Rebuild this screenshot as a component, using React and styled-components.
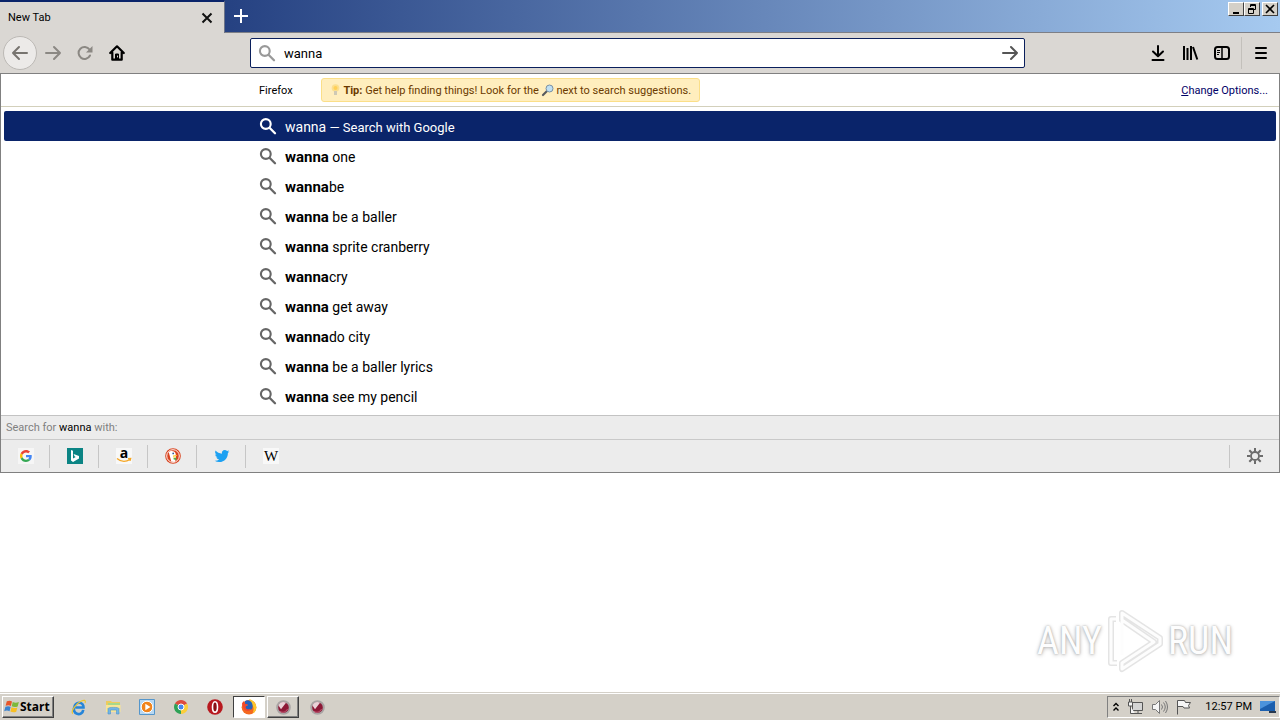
import React from "react";
import styled, { createGlobalStyle } from "styled-components";

const GlobalStyle = createGlobalStyle`
  * { box-sizing: border-box; }
  body { margin: 0; background: #fff; }
  body, button, input { font-family: Roboto, "DejaVu Sans", sans-serif; font-size: 11px; color: #000; }
  button { margin: 0; padding: 0; border: 0; background: none; }
  svg { display: block; flex: none; overflow: visible; }
`;

const Desktop = styled.div`
  position: relative;
  display: flex;
  flex-direction: column;
  min-height: 100vh;
`;

/* ---- title bar ---- */
const TitleBar = styled.header`
  display: flex;
  height: 33px;
  border-bottom: 1px solid #7d7f86;
  background: linear-gradient(to right, #0a246a, #a6caf0);
`;
const Tab = styled.div`
  display: flex;
  align-items: center;
  justify-content: space-between;
  width: 225px;
  height: 33px;
  padding: 0 11px 0 8px;
  border-top: 2px solid #0a246a;
  border-right: 1px solid #6d7488;
  background: #dad7d3;
  line-height: 14px;
`;
const TabButton = styled.button`
  display: flex;
  align-items: center;
  justify-content: center;
  width: 32px;
  height: 32px;
`;
const CloseTab = styled.button`
  display: flex;
`;
const WindowButtons = styled.div`
  display: flex;
  margin-left: auto;
  padding: 2px 2px 0 0;
`;
const WindowButton = styled.button`
  display: flex;
  align-items: center;
  justify-content: center;
  width: 16px;
  height: 14px;
  margin-left: ${(p) => (p.$apart ? "2px" : "0")};
  background: #d4d0c8;
  border: 1px solid;
  border-color: #fff #404040 #404040 #fff;
`;

/* ---- navigation bar ---- */
const NavBar = styled.nav`
  display: flex;
  align-items: center;
  height: 41px;
  padding: 0 2px 0 3px;
  border-bottom: 1px solid #808080;
  background: #dad7d3;
`;
const NavButton = styled.button`
  display: flex;
  align-items: center;
  justify-content: center;
  width: 32px;
  height: 32px;
`;
const BackButton = styled(NavButton)`
  width: 34px;
  height: 34px;
  border: 1px solid #bcb9b5;
  border-radius: 50%;
  background: #eceae8;
`;
const UrlBar = styled.form`
  display: flex;
  flex: 1;
  align-items: center;
  height: 30px;
  margin: 0 117px;
  padding: 0 5px 0 7px;
  border: 1px solid #0a1f5c;
  border-radius: 2px;
  background: #fff;
`;
const UrlInput = styled.input`
  flex: 1;
  min-width: 0;
  margin-left: 9px;
  padding: 0;
  border: 0;
  outline: 0;
  background: none;
  font-size: 13px;
`;
const MenuButton = styled(NavButton)`
  width: 37px;
  margin-left: 3px;
  padding-left: 2px;
  border-left: 1px solid #c3c0bb;
`;

/* ---- address bar results ---- */
const Popup = styled.section`
  border: 1px solid #808080;
  border-top: 0;
`;
const TipRow = styled.div`
  display: flex;
  align-items: center;
  height: 33px;
  padding: 0 11px 0 258px;
  border-bottom: 1px solid #d3d0bb;
`;
const TipBox = styled.div`
  display: flex;
  align-items: center;
  height: 24px;
  margin-left: 28px;
  padding: 0 8px;
  border: 1px solid #fbdf88;
  border-radius: 3px;
  background: #ffeebe;
  color: #6b3a00;
  white-space: pre;
`;
const OptionsLink = styled.a`
  margin-left: auto;
  color: #000066;
  text-decoration: none;
`;
const Results = styled.ul`
  margin: 0;
  padding: 4px 3px;
  list-style: none;
`;
const Result = styled.button`
  display: flex;
  align-items: center;
  width: 100%;
  height: 30px;
  padding-left: 255px;
  border-radius: 2px;
  background: ${(p) => (p.$selected ? "#0a246a" : "none")};
  color: ${(p) => (p.$selected ? "#fff" : "#000")};
  font-size: 14px;
  line-height: 20px;
  white-space: pre;
`;
const ResultText = styled.span`
  margin-left: 9px;
  padding-top: 2px;
`;
const Typed = styled.b`
  font-size: 15px;
`;
const Action = styled.span`
  font-size: 13px;
`;
const SearchWith = styled.div`
  height: 25px;
  padding-left: 5px;
  border-top: 1px solid #c3c3c3;
  border-bottom: 1px solid #c9c9c9;
  background: #ececec;
  color: #808080;
  line-height: 24px;
`;
const Query = styled.span`
  color: #000;
`;
const Engines = styled.div`
  display: flex;
  align-items: center;
  height: 32px;
  background: #ececec;
`;
const Engine = styled.button`
  display: flex;
  align-items: center;
  justify-content: center;
  width: 49px;
  height: 23px;
  padding-left: 2px;
  border-right: 1px solid ${(p) => (p.$last ? "transparent" : "#c6c6c6")};
`;
const EngineSettings = styled(Engine)`
  width: 50px;
  margin-left: auto;
  padding-left: 0;
  border-right: 0;
  border-left: 1px solid #c6c6c6;
`;

/* ---- page and watermark ---- */
const Page = styled.main`
  flex: 1;
`;
const Watermark = styled.div`
  position: absolute;
  right: 47px;
  bottom: 47px;
  display: flex;
  align-items: center;
  gap: 4px;
  color: #fdfdfd;
  font: 38px/64px "Liberation Sans Narrow", "Roboto Condensed", "DejaVu Sans Condensed", sans-serif;
  text-shadow: 0 0 2px #aaa, 0 1px 4px #bbb;
`;

/* ---- task bar ---- */
const TaskBar = styled.footer`
  display: flex;
  align-items: center;
  height: 28px;
  padding: 1px 0 0 2px;
  border-top: 1px solid #d4d0c8;
  background: #d4d0c8;
  box-shadow: inset 0 1px #fff;
`;
const StartButton = styled.button`
  display: flex;
  align-items: center;
  width: 52px;
  height: 22px;
  padding-left: 1px;
  border: 1px solid;
  border-color: #fff #404040 #404040 #fff;
  background: #d4d0c8;
  box-shadow: inset -1px -1px #808080;
  font: bold 12px/14px "Open Sans", "Noto Sans", sans-serif;
`;
const Tasks = styled.div`
  display: flex;
  gap: 2px;
  margin-left: 9px;
`;
const Task = styled.button`
  display: flex;
  align-items: center;
  justify-content: center;
  width: 32px;
  height: 22px;
  border: 1px solid transparent;
  border-color: ${(p) =>
    p.$look === "pressed" ? "#404040 #fff #fff #404040" : p.$look === "raised" ? "#fff #404040 #404040 #fff" : "transparent"};
  background: ${(p) => (p.$look === "pressed" ? "#fff" : "none")};
  box-shadow: ${(p) => (p.$look === "raised" ? "inset -1px -1px #808080" : "none")};
`;
const Tray = styled.div`
  display: flex;
  align-items: center;
  gap: 7px;
  height: 22px;
  margin-left: auto;
  padding: 0 3px 0 4px;
  border: 1px solid;
  border-color: #808080 #fff #fff #808080;
`;
const Clock = styled.time`
  margin: 0 1px 0 6px;
  line-height: 14px;
`;

const Magnifier = ({ color }) => (
  <svg width="17" height="17" viewBox="0 0 17 17" fill="none" stroke={color}>
    <circle cx="6.800" cy="6" r="4.900" strokeWidth="2.100" />
    <path d="M10.500 9.700l5.500 5.500" strokeWidth="2.300" strokeLinecap="round" />
  </svg>
);

const Arrow = ({ color, flip }) => (
  <svg width="18" height="16" viewBox="0 0 18 16" fill="none" stroke={color} strokeWidth="2" strokeLinecap="round" strokeLinejoin="round">
    <path d={flip ? "M16 8H2M8 2L2 8l6 6" : "M2 8h14M10 2l6 6-6 6"} />
  </svg>
);

const GoogleIcon = () => (
  <svg width="16" height="16" viewBox="-8 -8 64 64">
    <rect x="-8" y="-8" width="64" height="64" fill="#f6f6f6" />
    <path fill="#EA4335" d="M24 9.500c3.500 0 6.700 1.200 9.200 3.600l6.900-6.900C35.900 2.400 30.500 0 24 0 14.600 0 6.500 5.400 2.600 13.200l8 6.200C12.400 13.700 17.700 9.500 24 9.500z" />
    <path fill="#4285F4" d="M47 24.600c0-1.600-.2-3.100-.4-4.600H24v9h12.900c-.6 3-2.300 5.500-4.800 7.200l7.700 6C44.400 38 47 32.100 47 24.600z" />
    <path fill="#FBBC05" d="M10.500 28.600c-.5-1.500-.8-3-.8-4.600s.3-3.100.8-4.600l-8-6.200C.9 16.500 0 20.100 0 24s.9 7.500 2.600 10.800z" />
    <path fill="#34A853" d="M24 48c6.500 0 11.900-2.100 15.900-5.800l-7.700-6c-2.200 1.500-4.900 2.300-8.200 2.300-6.300 0-11.600-4.200-13.500-9.900l-8 6.200C6.500 42.600 14.600 48 24 48z" />
  </svg>
);
const BingIcon = () => (
  <svg width="16" height="16" viewBox="0 0 16 16">
    <path d="M0 0h16v16H0z" fill="#0b8484" />
    <path d="M4 2l2 .8v7.800L8.700 9 7.500 8.300 6.600 6 12 8v2.600L6 14l-2-1.400z" fill="#fff" />
  </svg>
);
const AmazonIcon = () => (
  <svg width="16" height="16" viewBox="0 0 16 16">
    <path d="M0 0h16v16H0z" fill="#f8f8f8" />
    <text x="8" y="10" textAnchor="middle" fontFamily="Open Sans, sans-serif" fontWeight="bold" fontSize="14">a</text>
    <path d="M1 10.500c4 3.500 9 3.500 13 1M12 10.700l2.700-.2-.7 2.400" fill="none" stroke="#f5a623" strokeWidth="1.300" />
  </svg>
);
const DuckIcon = () => (
  <svg width="16" height="16" viewBox="0 0 17 17">
    <circle cx="8.500" cy="8.500" r="8.300" fill="#d9441f" />
    <circle cx="8.500" cy="8.500" r="6.700" fill="#d9441f" stroke="#fff" />
    <path d="M4 4.500c2-2.500 7-1.500 7.400 2l.3 5.500-1.500 3-3.500-.6z" fill="#fff" />
    <path d="M8.500 8c2-1 4-.7 4.500-.3-.5 1-2 1.300-3.500 1.500l2 .8-2.500.3z" fill="#fc3" />
    <path d="M9 11l3-1v3l-3-1z" fill="#57a943" />
    <circle cx="8.700" cy="5.800" r=".9" fill="#24508d" />
  </svg>
);
const TwitterIcon = () => (
  <svg width="16" height="16" viewBox="-1 -1 26 26">
    <path fill="#1da1f2" d="M23.950 4.570a10 10 0 01-2.820.77 4.960 4.960 0 002.160-2.720c-.95.560-2 .96-3.130 1.190a4.920 4.920 0 00-8.380 4.480C7.690 8.090 4.070 6.130 1.640 3.160a4.920 4.920 0 001.520 6.570 4.900 4.900 0 01-2.230-.61v.06a4.920 4.920 0 003.950 4.830 5 5 0 01-2.210.08 4.940 4.940 0 004.600 3.420A9.870 9.870 0 010 19.540a14 14 0 007.550 2.210c9.050 0 14-7.500 14-13.980 0-.21 0-.42-.02-.63a9.940 9.940 0 002.460-2.550z" />
  </svg>
);
const WikiIcon = () => (
  <svg width="16" height="16" viewBox="0 0 16 16">
    <path d="M0 0h16v16H0z" fill="#f8f8f8" />
    <text x="8" y="13" textAnchor="middle" fontFamily="Liberation Serif, serif" fontSize="15">W</text>
  </svg>
);
const GearIcon = () => (
  <svg width="16" height="16" viewBox="0 0 16 16" fill="none" stroke="#6c6c6c">
    <circle cx="8" cy="8" r="4" strokeWidth="1.800" />
    <path strokeWidth="2" d="M8 0v3.500M8 12.500V16M0 8h3.500M12.500 8H16M2.300 2.300l2.500 2.500M11.200 11.200l2.500 2.500M13.700 2.300l-2.500 2.500M4.800 11.200l-2.500 2.500" />
  </svg>
);
const BulbIcon = () => (
  <svg width="11" height="12" viewBox="0 0 11 12" opacity=".8">
    <circle cx="5.500" cy="4" r="3.800" fill="#fbdc84" />
    <circle cx="5.500" cy="4" r="2" fill="#ffc93e" />
    <path d="M4 7h3v4H4z" fill="#c4c1b4" />
  </svg>
);
const LensIcon = () => (
  <svg width="12" height="12" viewBox="0 0 12 12">
    <path d="M1 11l4-4" stroke="#56585c" strokeWidth="2.200" strokeLinecap="round" />
    <circle cx="7.500" cy="4.500" r="3.500" fill="#bfdff2" stroke="#7990a3" />
  </svg>
);

const WindowsIcon = () => (
  <svg width="16" height="16" viewBox="0 0 17 16">
    <path d="M3 2c2-1 4-1 5.500.2L7.300 7C5.500 6 4 6 1.700 6.800z" fill="#e8562a" />
    <path d="M9.300 2.600c2 1 4 1 6.500.1L14.500 7.500c-2 .8-4.300.8-6.300-.2z" fill="#7db93c" />
    <path d="M1.500 7.700c2-.9 4-.8 5.600.1L5.900 12.500C4 11.600 2.300 11.700.2 12.400z" fill="#3c83cf" />
    <path d="M8 8.200c2 .9 4 1 6.200.2L13 13c-2 .9-4.300.8-6.200-.1z" fill="#f8bf23" />
  </svg>
);
const IeIcon = () => (
  <svg width="16" height="16" viewBox="0 0 17 17" fill="none">
    <path d="M13 11.500A5 5 0 113.700 8.500 4.800 4.800 0 0113.300 9H5" stroke="#2685d9" strokeWidth="2.800" />
    <path d="M2 15.500C-1 14 5 5 11 2.200c3-1.500 5-1 4 2" stroke="#edc52f" strokeWidth="1.300" />
  </svg>
);
const FolderIcon = () => (
  <svg width="17" height="16" viewBox="0 0 17 16">
    <path d="M1 2h5l1 1h8v9H1z" fill="#edcb5d" />
    <path d="M3 4h12v6H3z" fill="#a7d88a" />
    <path d="M1 6h14.500v7H1z" fill="#f8e596" />
    <path d="M3 15V9.500C3 8 14 8 14 9.500V15h-2.500v-4h-6v4z" fill="#73b5e6" stroke="#4c93cb" strokeWidth=".6" />
  </svg>
);
const PlayerIcon = () => (
  <svg width="16" height="16" viewBox="0 0 16 16">
    <path d="M.5.500h15v15H.5z" fill="#b8d8f2" stroke="#5596cb" />
    <circle cx="8" cy="8" r="5.800" fill="#f1841c" stroke="#fff" />
    <path d="M6.300 4.700v6.600L11.500 8z" fill="#fff" />
  </svg>
);
const ChromeIcon = () => (
  <svg width="14" height="14" viewBox="0 0 14 14">
    <path d="M7 7L.94 3.500A7 7 0 0113.060 3.500z" fill="#dd4b3e" />
    <path d="M7 7L.94 3.500A7 7 0 007 14z" fill="#2ea156" />
    <path d="M7 7l6.060-3.500A7 7 0 017 14z" fill="#fbce3a" />
    <circle cx="7" cy="7" r="3" fill="#4587ee" stroke="#fff" />
  </svg>
);
const OperaIcon = () => (
  <svg width="16" height="16" viewBox="0 0 16 16">
    <circle cx="8" cy="8" r="7.800" fill="#b8191f" />
    <ellipse cx="8" cy="8" rx="2.500" ry="5.200" fill="#8a1014" stroke="#fff" strokeWidth="1.600" />
  </svg>
);
const FirefoxIcon = () => (
  <svg width="16" height="16" viewBox="0 0 17 17">
    <circle cx="8.500" cy="8.800" r="7.800" fill="#f4691f" />
    <path d="M9 0c4 1.500 7.500 4.500 7.300 9.500-.3 3-2 5-4 6 1-3 2-6-.5-9C9.800 5 8.300 3 9 0z" fill="#fdc52c" />
    <path d="M4 2.500C7 .3 10 1.500 11.500 4c2 4 .5 8-3 8C5.500 12 4 10 4.500 8l3-1.300L4.300 5z" fill="#2563bd" />
    <path d="M1 5l1.500-3 1.500 3 3.500.8-2.800 2.400c0 3 4 3.500 6.300 2-1.500 3.500-6 3-8 .5z" fill="#f2472e" />
  </svg>
);
const OrbIcon = () => (
  <svg width="15" height="15" viewBox="0 0 15 15">
    <circle cx="7.500" cy="7.500" r="6.300" fill="#8d1836" stroke="#a9a4a4" strokeWidth="2" />
    <path d="M2.500 5.500c1-3 4.500-4.500 7.500-2.700L7.500 6 5 9.300z" fill="#ead2d8" />
    <path d="M4 11.500c3 1.500 6 .5 7.500-2.500" fill="none" stroke="#c65a74" />
  </svg>
);
const TrayMarks = () => (
  <>
    <svg width="8" height="11" viewBox="0 0 8 11" fill="none" stroke="#000" strokeWidth="1.400"><path d="M1.500 4L4 1.500 6.500 4M1.500 8.500L4 6l2.500 2.500" /></svg>
    <svg width="17" height="16" viewBox="0 0 17 16" fill="none" stroke="#555">
      <path d="M5.500 3.500h10v8h-10zM7 14.500h8M11 12v2" fill="#d4d4d4" />
      <path d="M1.500 3v4h4V3zM2.500 0v3M4.500 0v3M3.500 7v7.500H8" fill="#f5f5f5" />
    </svg>
    <svg width="17" height="16" viewBox="0 0 17 16" fill="none" stroke="#777">
      <path d="M1.500 5.500h3l4-4v13l-4-4h-3z" fill="#f5f5f5" />
      <path d="M10.500 5.500q2 2.500 0 5M12.500 3.500q3.500 4.500 0 9M14.500 2q4 6 0 12" />
    </svg>
    <svg width="17" height="16" viewBox="0 0 17 16" fill="#f5f5f5" stroke="#555">
      <path d="M2.500 15.500v-14h7l1 2h5l-2 3 1 2.500H9l-1-1.500H3" />
    </svg>
  </>
);

const suggestions = [" one", "be", " be a baller", " sprite cranberry", "cry", " get away", "do city", " be a baller lyrics", " see my pencil"];
const engines = [
  ["Google", GoogleIcon],
  ["Bing", BingIcon],
  ["Amazon", AmazonIcon],
  ["DuckDuckGo", DuckIcon],
  ["Twitter", TwitterIcon],
  ["Wikipedia", WikiIcon],
];
const tasks = [
  ["Internet Explorer", IeIcon],
  ["Explorer", FolderIcon],
  ["Media Player", PlayerIcon],
  ["Chrome", ChromeIcon],
  ["Opera", OperaIcon],
  ["Firefox", FirefoxIcon, "pressed"],
  ["Application window", OrbIcon, "raised"],
  ["Application", OrbIcon],
];

export default function App() {
  return (
    <Desktop>
      <GlobalStyle />
      <TitleBar>
        <Tab>
          <span>New Tab</span>
          <CloseTab aria-label="Close tab">
            <svg width="12" height="12" viewBox="0 0 12 12" stroke="#111" strokeWidth="2"><path d="M1.500 1.500l9 9M10.500 1.500l-9 9" /></svg>
          </CloseTab>
        </Tab>
        <TabButton aria-label="New tab">
          <svg width="14" height="14" viewBox="0 0 14 14" stroke="#fff" strokeWidth="2"><path d="M7 0v14M0 7h14" /></svg>
        </TabButton>
        <WindowButtons>
          <WindowButton aria-label="Minimize">
            <svg width="10" height="10" viewBox="0 0 10 10"><path d="M2 8h6v2H2z" /></svg>
          </WindowButton>
          <WindowButton aria-label="Restore">
            <svg width="10" height="10" viewBox="0 0 10 10" fill="none" stroke="#000"><path d="M3.500 3V.500h5v5H7M3 1.500h6M1.500 4.500h5v5h-5zM1 5.500h6" /></svg>
          </WindowButton>
          <WindowButton aria-label="Close" $apart>
            <svg width="10" height="10" viewBox="0 0 10 10" stroke="#000" strokeWidth="1.600"><path d="M1 1l8 8M9 1L1 9" /></svg>
          </WindowButton>
        </WindowButtons>
      </TitleBar>

      <NavBar>
        <BackButton aria-label="Back"><Arrow flip color="#77746f" /></BackButton>
        <NavButton aria-label="Forward"><Arrow color="#8b8883" /></NavButton>
        <NavButton aria-label="Reload">
          <svg width="16" height="16" viewBox="0 0 16 16" fill="none" stroke="#8b8883" strokeWidth="2">
            <path d="M13 10.500A6 6 0 1 1 12.500 4.500" strokeLinecap="round" />
            <path d="M15.500 1v6.500H9z" fill="#8b8883" stroke="none" />
          </svg>
        </NavButton>
        <NavButton aria-label="Home">
          <svg width="16" height="16" viewBox="0 0 16 16" fill="none" stroke="#000" strokeWidth="2.200" strokeLinejoin="round" strokeLinecap="round">
            <path d="M1.200 8L8 1.300 14.800 8M3.300 7.500v7.200h9.400V7.500" />
            <path d="M6.500 14V9h3v5z" strokeWidth="1" fill="#000" />
            <path d="M8.500 11v1" stroke="#dad7d3" strokeWidth="1" />
          </svg>
        </NavButton>
        <UrlBar role="search">
          <Magnifier color="#999" />
          <UrlInput aria-label="Search or enter address" defaultValue="wanna" />
          <Arrow color="#555" />
        </UrlBar>
        <NavButton aria-label="Downloads">
          <svg width="14" height="16" viewBox="0 0 14 16" fill="none" stroke="#000" strokeWidth="2" strokeLinecap="round" strokeLinejoin="round">
            <path d="M7 1v10M2 6.500L7 11.300l5-4.800M1.500 15h11" />
          </svg>
        </NavButton>
        <NavButton aria-label="Library">
          <svg width="16" height="16" viewBox="0 0 16 16" fill="none" stroke="#000" strokeWidth="2">
            <path d="M2 1v14M5.500 3v12M9 1v14M11 2l4.300 12.500" />
          </svg>
        </NavButton>
        <NavButton aria-label="Sidebars">
          <svg width="16" height="14" viewBox="0 0 16 14" fill="none" stroke="#000" strokeWidth="2">
            <rect x="1" y="1" width="14" height="12" rx="2.500" />
            <path d="M8 1v12" strokeWidth="1.500" />
            <path d="M3 4.500h3M3 6.500h3M3 8.500h2" strokeWidth="1" />
          </svg>
        </NavButton>
        <MenuButton aria-label="Menu">
          <svg width="12" height="12" viewBox="0 0 12 12" stroke="#000" strokeWidth="2" strokeLinecap="round"><path d="M1 1h10M1 6h10M1 11h10" /></svg>
        </MenuButton>
      </NavBar>

      <Popup>
        <TipRow>
          <span>Firefox</span>
          <TipBox>
            <BulbIcon />
            <span> <b>Tip:</b> Get help finding things! Look for the </span>
            <LensIcon />
            <span> next to search suggestions.</span>
          </TipBox>
          <OptionsLink href="#options"><u>C</u>hange Options...</OptionsLink>
        </TipRow>
        <Results>
          <li>
            <Result $selected>
              <Magnifier color="#fff" />
              <ResultText>wanna<Action> — Search with Google</Action></ResultText>
            </Result>
          </li>
          {suggestions.map((rest) => (
            <li key={rest}>
              <Result>
                <Magnifier color="#666" />
                <ResultText><Typed>wanna</Typed>{rest}</ResultText>
              </Result>
            </li>
          ))}
        </Results>
        <SearchWith>Search for <Query>wanna</Query> with:</SearchWith>
        <Engines>
          {engines.map(([name, Icon], i) => (
            <Engine key={name} aria-label={name} $last={i === engines.length - 1}><Icon /></Engine>
          ))}
          <EngineSettings aria-label="Change search settings"><GearIcon /></EngineSettings>
        </Engines>
      </Popup>

      <Page />
      <Watermark>
        <span>ANY</span>
        <svg width="58" height="64" viewBox="0 0 58 64" fill="none" strokeLinejoin="round">
          <g stroke="#d2d2d2" strokeWidth="6" opacity=".6">
            <path d="M16 4l38 25v6L16 60v-6l32-21L16 11zM10 10H5v44h6" />
          </g>
          <g stroke="#fdfdfd" strokeWidth="3">
            <path d="M16 4l38 25v6L16 60v-6l32-21L16 11zM10 10H5v44h6M16 12v34" />
          </g>
        </svg>
        <span>RUN</span>
      </Watermark>

      <TaskBar>
        <StartButton><WindowsIcon />Start</StartButton>
        <Tasks>
          {tasks.map(([name, Icon, look]) => (
            <Task key={name} aria-label={name} $look={look}><Icon /></Task>
          ))}
        </Tasks>
        <Tray>
          <TrayMarks />
          <Clock>12:57 PM</Clock>
          <svg width="16" height="14" viewBox="0 0 16 14">
            <path d="M0 1h15v10H0z" fill="#1b5fae" />
            <path d="M0 1h15L0 9z" fill="#4b93dc" />
            <path d="M9 11h7v2H9z" fill="#27384e" />
          </svg>
        </Tray>
      </TaskBar>
    </Desktop>
  );
}
